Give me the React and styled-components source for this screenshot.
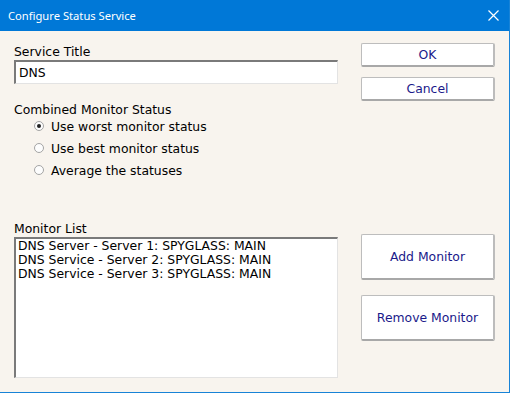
import React from "react";
import styled, { createGlobalStyle } from "styled-components";

const GlobalStyle = createGlobalStyle`
  html, body {
    margin: 0;
    padding: 0;
    background: #f8f4ee;
  }
  * { box-sizing: border-box; }
`;

const Window = styled.div`
  width: 510px;
  height: 393px;
  display: flex;
  flex-direction: column;
  background: #f8f4ee;
  border-right: 1px solid #1883d7;
  border-bottom: 1px solid #1883d7;
  font-family: "DejaVu Sans", Verdana, sans-serif;
  font-size: 12.4px;
  color: #000;
`;

const TitleBar = styled.div`
  height: 31px;
  flex-shrink: 0;
  background: #0078d7;
  color: #fff;
  display: flex;
  align-items: center;
  justify-content: space-between;
  padding: 0 10px 0 8px;
  font-family: "Noto Sans", "Open Sans", sans-serif;
  font-size: 11.2px;
`;

const CloseIcon = () => (
  <svg width="11" height="11" viewBox="0 0 11 11">
    <path d="M0.5 0.5 L10.5 10.5 M10.5 0.5 L0.5 10.5" stroke="#fff" strokeWidth="1.2" />
  </svg>
);

const Body = styled.div`
  flex: 1;
  display: flex;
  padding: 8px 14px 14px 14px;
  gap: 23px;
`;

const LeftCol = styled.div`
  width: 324px;
  display: flex;
  flex-direction: column;
`;

const RightCol = styled.div`
  flex: 1;
  display: flex;
  flex-direction: column;
  padding-top: 4px;
`;

const Label = styled.div`
  height: 16px;
  line-height: 16px;
  margin-top: ${(p) => p.$top || 0}px;
`;

const Sunken = styled.div`
  background: #fff;
  border-top: 2px solid #7a7a7a;
  border-left: 2px solid #7a7a7a;
  border-right: 1px solid #e3e3e3;
  border-bottom: 1px solid #e3e3e3;
`;

const TextBox = styled(Sunken)`
  height: 24px;
  padding: 2px 3px;
  line-height: 17px;
`;

const ListBox = styled(Sunken)`
  flex: 1;
  padding: 0 2px;
  line-height: 14px;
`;

const RadioGroup = styled.div`
  display: flex;
  flex-direction: column;
  gap: 6px;
  padding: 0 0 0 20px;
`;

const RadioRow = styled.div`
  display: flex;
  align-items: center;
  gap: 7px;
  height: 16px;
`;

const RadioDot = styled.span`
  width: 10px;
  height: 10px;
  border-radius: 50%;
  border: 1px solid #a4a4a4;
  background: #fdfdfd;
  display: flex;
  align-items: center;
  justify-content: center;
  &::after {
    content: "";
    width: 4px;
    height: 4px;
    border-radius: 50%;
    background: ${(p) => (p.$checked ? "#222" : "transparent")};
  }
`;

const Button = styled.div`
  width: 134px;
  height: ${(p) => p.$h || 24}px;
  margin-top: ${(p) => p.$top || 0}px;
  background: #fff;
  border: 1px solid #bdbdbd;
  border-bottom: 2px solid #a8a8a8;
  border-right: 2px solid #bcbcbc;
  border-radius: 2px;
  color: #1a1a8a;
  display: flex;
  align-items: center;
  justify-content: center;
`;

const options = [
  { text: "Use worst monitor status", checked: true },
  { text: "Use best monitor status" },
  { text: "Average the statuses" },
];

const monitors = [
  "DNS Server - Server 1: SPYGLASS: MAIN",
  "DNS Service - Server 2: SPYGLASS: MAIN",
  "DNS Service - Server 3: SPYGLASS: MAIN",
];

export default function App() {
  return (
    <>
      <GlobalStyle />
      <Window>
        <TitleBar>
          <span>Configure Status Service</span>
          <CloseIcon />
        </TitleBar>
        <Body>
          <LeftCol>
            <Label $top={5}>Service Title</Label>
            <TextBox>DNS</TextBox>
            <Label $top={18}>Combined Monitor Status</Label>
            <RadioGroup>
              {options.map((o) => (
                <RadioRow key={o.text}>
                  <RadioDot $checked={o.checked} />
                  <span>{o.text}</span>
                </RadioRow>
              ))}
            </RadioGroup>
            <Label $top={43}>Monitor List</Label>
            <ListBox>
              {monitors.map((m) => (
                <div key={m}>{m}</div>
              ))}
            </ListBox>
          </LeftCol>
          <RightCol>
            <Button>OK</Button>
            <Button $top={10}>Cancel</Button>
            <Button $top={133} $h={46}>Add Monitor</Button>
            <Button $top={15} $h={46}>Remove Monitor</Button>
          </RightCol>
        </Body>
      </Window>
    </>
  );
}
